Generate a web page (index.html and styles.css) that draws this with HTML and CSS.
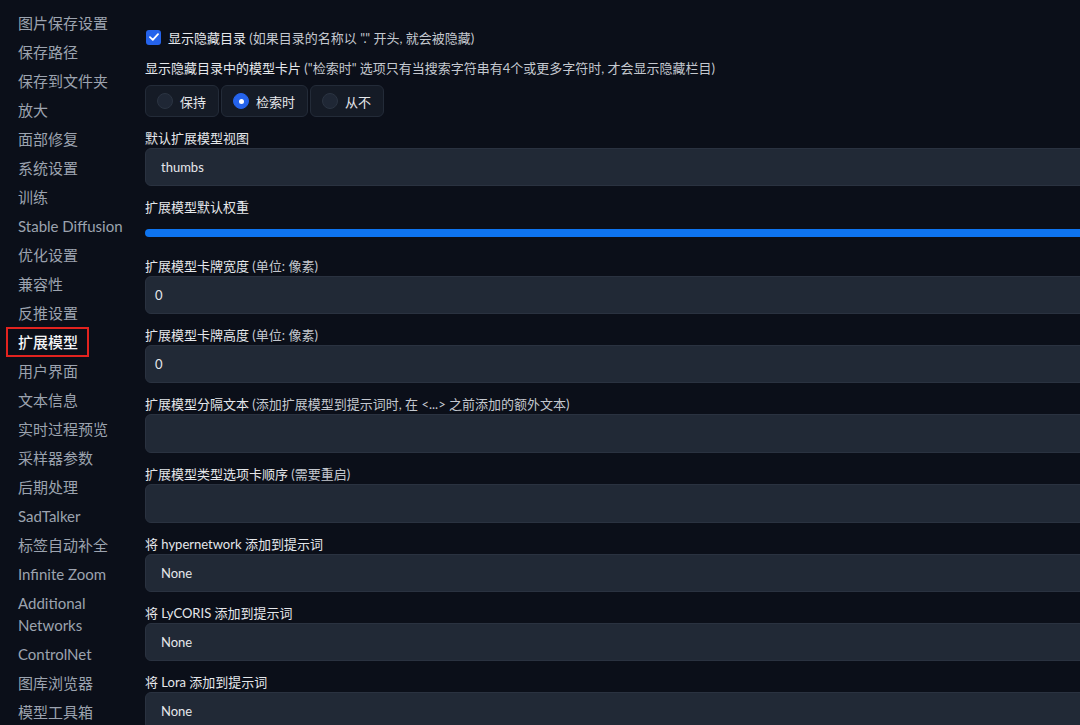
FILE: index.html
```html
<!DOCTYPE html>
<html lang="zh">
  <head>
    <meta charset="UTF-8" />
    <meta name="viewport" content="width=device-width, initial-scale=1.0" />
    <title>设置 - 扩展模型</title>
    <link rel="stylesheet" href="styles.css">
  </head>
  <body>
    <div class="page">
      <ul class="side-nav">
        <li>图片保存设置</li>
        <li>保存路径</li>
        <li>保存到文件夹</li>
        <li>放大</li>
        <li>面部修复</li>
        <li>系统设置</li>
        <li>训练</li>
        <li>Stable Diffusion</li>
        <li>优化设置</li>
        <li>兼容性</li>
        <li>反推设置</li>
        <li class="active">扩展模型</li>
        <li>用户界面</li>
        <li>文本信息</li>
        <li>实时过程预览</li>
        <li>采样器参数</li>
        <li>后期处理</li>
        <li>SadTalker</li>
        <li>标签自动补全</li>
        <li>Infinite Zoom</li>
        <li>Additional<br>Networks</li>
        <li>ControlNet</li>
        <li>图库浏览器</li>
        <li>模型工具箱</li>
      </ul>

      <div class="settings">
        <label class="check-row">
          <span class="checkbox">
            <svg width="10" height="8" viewBox="0 0 10 8"><path d="M1 4.2 L3.8 6.8 L9 1.2" fill="none" stroke="#fff" stroke-width="1.8" stroke-linecap="round" stroke-linejoin="round"/></svg>
          </span>
          <span>显示隐藏目录 <span class="hint">(如果目录的名称以 "." 开头, 就会被隐藏)</span></span>
        </label>

        <div class="field radio-field">
          <div class="label">显示隐藏目录中的模型卡片 <span class="hint">("检索时" 选项只有当搜索字符串有4个或更多字符时, 才会显示隐藏栏目)</span></div>
          <div class="radio-group">
            <div class="radio"><span class="dot"></span>保持</div>
            <div class="radio"><span class="dot on"></span>检索时</div>
            <div class="radio"><span class="dot"></span>从不</div>
          </div>
        </div>

        <div class="field">
          <div class="label">默认扩展模型视图</div>
          <div class="box select">thumbs</div>
        </div>

        <div class="field">
          <div class="label">扩展模型默认权重</div>
          <div class="slider"><div class="track"></div></div>
        </div>

        <div class="field">
          <div class="label">扩展模型卡牌宽度 <span class="hint">(单位: 像素)</span></div>
          <div class="box number">0</div>
        </div>

        <div class="field">
          <div class="label">扩展模型卡牌高度 <span class="hint">(单位: 像素)</span></div>
          <div class="box number">0</div>
        </div>

        <div class="field">
          <div class="label">扩展模型分隔文本 <span class="hint">(添加扩展模型到提示词时, 在 &lt;...&gt; 之前添加的额外文本)</span></div>
          <div class="box text"></div>
        </div>

        <div class="field">
          <div class="label">扩展模型类型选项卡顺序 <span class="hint">(需要重启)</span></div>
          <div class="box text"></div>
        </div>

        <div class="field">
          <div class="label">将 hypernetwork 添加到提示词</div>
          <div class="box select">None</div>
        </div>

        <div class="field">
          <div class="label">将 LyCORIS 添加到提示词</div>
          <div class="box select">None</div>
        </div>

        <div class="field">
          <div class="label">将 Lora 添加到提示词</div>
          <div class="box select">None</div>
        </div>
      </div>
    </div>
  </body>
</html>
```

FILE: styles.css
```css
html, body {
  margin: 0;
  height: 100%;
  overflow: hidden;
}
body {
  background: #0b0f19;
  color: #e5e7eb;
  font-family: Lato, "Noto Sans CJK SC", sans-serif;
}
.page {
  display: flex;
  width: 1160px;
}

/* left nav */
.side-nav {
  list-style: none;
  margin: 0;
  padding: 12px 0 0 18px;
  width: 127px;
  flex-shrink: 0;
  font-size: 15px;
  line-height: 22px;
  color: #9ca3af;
}
.side-nav li {
  margin-bottom: 7px;
  white-space: nowrap;
}
.side-nav li.active {
  width: fit-content;
  margin: -4px 0 3px -12px;
  padding: 2px 9px 2px 10px;
  border: 2px solid #e3231f;
  color: #f3f4f6;
  font-weight: 500;
}

/* settings column */
.settings {
  flex: 1;
  padding-top: 28px;
}
.check-row {
  display: flex;
  align-items: center;
  gap: 7px;
  height: 18px;
  font-size: 13px;
  margin-bottom: 13px;
  padding-left: 1px;
}
.checkbox {
  width: 15px;
  height: 15px;
  border-radius: 3px;
  background: #2563eb;
  display: flex;
  align-items: center;
  justify-content: center;
}
.hint {
  color: #c4c8cf;
}
.field {
  margin-bottom: 12px;
}
.label {
  font-size: 13px;
  line-height: 18px;
  margin-bottom: 1px;
  white-space: nowrap;
}
.radio-field .label {
  margin-bottom: 8px;
}
.radio-group {
  display: flex;
  gap: 2px;
}
.radio {
  display: flex;
  align-items: center;
  gap: 7px;
  height: 32px;
  padding: 0 12px 0 11px;
  box-sizing: border-box;
  border: 1px solid #232b38;
  border-radius: 6px;
  background: #151b26;
  font-size: 13px;
}
.dot {
  width: 16px;
  height: 16px;
  border-radius: 50%;
  background: #1f2735;
  border: 1px solid #2b3442;
  box-sizing: border-box;
}
.dot.on {
  background: #2563eb;
  border-color: #2563eb;
  position: relative;
}
.dot.on::after {
  content: "";
  position: absolute;
  left: 4.5px;
  top: 4.5px;
  width: 5px;
  height: 5px;
  border-radius: 50%;
  background: #fff;
}
.box {
  height: 38px;
  box-sizing: border-box;
  background: #212936;
  border: 1px solid #2a3240;
  border-radius: 6px;
  font-size: 13px;
  line-height: 36px;
  color: #e5e7eb;
}
.box.select {
  padding-left: 15px;
}
.box.number {
  padding-left: 9px;
}
.box.text {
  height: 39px;
}
.slider {
  padding: 12px 0 8px;
}
.track {
  height: 8px;
  border-radius: 4px;
  background: #0e74f0;
}
```
